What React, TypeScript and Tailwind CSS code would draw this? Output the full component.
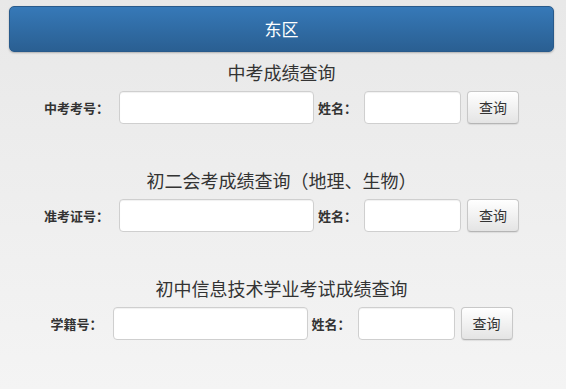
const font = {
  fontFamily: '"Noto Sans CJK SC", "Liberation Sans", sans-serif',
}

const sections = [
  { title: "中考成绩查询", label: "中考考号：" },
  { title: "初二会考成绩查询（地理、生物）", label: "准考证号：" },
  { title: "初中信息技术学业考试成绩查询", label: "学籍号：" },
]

export default function App() {
  return (
    <div
      className="h-[389px] w-full overflow-hidden bg-gradient-to-b from-[#e8e8e8] to-[#f4f4f4] pt-[6px]"
      style={font}
    >
      <div className="ml-[9px] w-[545px]">
        {/* Header bar */}
        <div className="flex h-[46px] items-center justify-center rounded-[5px] border border-[#285a8b] bg-gradient-to-b from-[#3679b8] to-[#2a5f92] text-[17px] text-white shadow-[0_1px_2px_rgba(0,0,0,0.25)]">
          东区
        </div>

        <div className="mt-[8px] flex flex-col gap-[44px]">
          {sections.map((s) => (
            <QueryForm key={s.title} title={s.title} label={s.label} />
          ))}
        </div>
      </div>
    </div>
  )
}

function QueryForm({ title, label }: { title: string; label: string }) {
  return (
    <div className="flex flex-col items-center">
      <h2 className="h-[24px] text-[18px] leading-[24px] text-[#333]">{title}</h2>
      <div className="mt-[7px] flex items-center">
        <span className="mr-[10px] text-[13px] font-bold text-[#333]">{label}</span>
        <input className="h-[33px] w-[195px] rounded-[4px] border border-[#cfcfcf] bg-white shadow-[inset_0_1px_1px_rgba(0,0,0,0.06)] outline-none" />
        <span className="ml-[4px] mr-[7px] text-[13px] font-bold text-[#333]">姓名：</span>
        <input className="h-[33px] w-[97px] rounded-[4px] border border-[#cfcfcf] bg-white shadow-[inset_0_1px_1px_rgba(0,0,0,0.06)] outline-none" />
        <button className="ml-[6px] h-[33px] w-[52px] rounded-[4px] border border-[#c8c8c8] border-b-[#b5b5b5] bg-gradient-to-b from-white to-[#e4e4e4] text-[14px] text-[#333] shadow-[0_1px_1px_rgba(0,0,0,0.08)]">
          查询
        </button>
      </div>
    </div>
  )
}
